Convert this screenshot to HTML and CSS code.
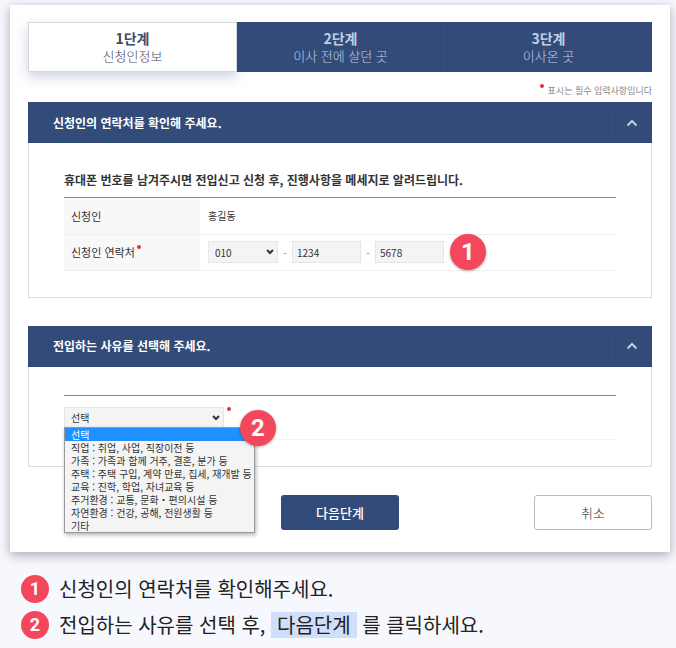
FILE: index.html
```html
<!DOCTYPE html>
<html lang="ko">
  <head>
    <meta charset="UTF-8" />
    <meta name="viewport" content="width=device-width, initial-scale=1.0" />
    <link rel="stylesheet" href="styles.css">
    <title>전입신고</title>
  </head>
  <body>
    <form class="card">
      <ol class="steps">
        <li class="step active"><strong>1단계</strong><span>신청인정보</span></li>
        <li class="step"><strong>2단계</strong><span>이사 전에 살던 곳</span></li>
        <li class="step"><strong>3단계</strong><span>이사온 곳</span></li>
      </ol>

      <p class="note"><span class="required"></span>표시는 필수 입력사항입니다</p>

      <!-- contact -->
      <section class="panel">
        <div class="panel-head">
          <h2>신청인의 연락처를 확인해 주세요.</h2>
          <button type="button" class="toggle" aria-label="접기">
            <svg width="12" height="8" viewBox="0 0 12 8"><path d="M1.5 6.5 6 2l4.500 4.500" /></svg>
          </button>
        </div>
        <div class="panel-body">
          <h3>휴대폰 번호를 남겨주시면 전입신고 신청 후, 진행사항을 메세지로 알려드립니다.</h3>
          <table class="info">
            <tr>
              <th scope="row">신청인</th>
              <td>홍길동</td>
            </tr>
            <tr>
              <th scope="row"><label for="phone1">신청인 연락처</label><span class="required"></span></th>
              <td>
                <div class="phone">
                  <div class="select">
                    <select id="phone1"><option>010</option></select>
                    <svg width="8" height="6" viewBox="0 0 8 6"><path d="M1 1l3 3 3-3" /></svg>
                  </div>
                  <span class="dash">-</span>
                  <input type="text" value="1234" aria-label="가운데 번호" />
                  <span class="dash">-</span>
                  <input type="text" value="5678" aria-label="끝 번호" />
                  <span class="badge">1</span>
                </div>
              </td>
            </tr>
          </table>
        </div>
      </section>

      <!-- reason -->
      <section class="panel">
        <div class="panel-head">
          <h2>전입하는 사유를 선택해 주세요.</h2>
          <button type="button" class="toggle" aria-label="접기">
            <svg width="12" height="8" viewBox="0 0 12 8"><path d="M1.5 6.5 6 2l4.500 4.500" /></svg>
          </button>
        </div>
        <div class="panel-body">
          <div class="reason">
            <div class="reason-field">
              <div class="select">
                <select id="reason" aria-label="전입 사유"><option>선택</option></select>
                <svg width="8" height="6" viewBox="0 0 8 6"><path d="M1 1l3 3 3-3" /></svg>
              </div>
              <ul class="menu">
                <li class="selected">선택</li>
                <li>직업 : 취업, 사업, 직장이전 등</li>
                <li>가족 : 가족과 함께 거주, 결혼, 분가 등</li>
                <li>주택 : 주택 구입, 계약 만료, 집세, 재개발 등</li>
                <li>교육 : 진학, 학업, 자녀교육 등</li>
                <li>주거환경 : 교통, 문화・편의시설 등</li>
                <li>자연환경 : 건강, 공해, 전원생활 등</li>
                <li>기타</li>
              </ul>
              <span class="badge">2</span>
            </div>
            <span class="required"></span>
          </div>
        </div>
      </section>

      <div class="actions">
        <button type="button" class="button next">다음단계</button>
        <button type="button" class="button cancel">취소</button>
      </div>
    </form>

    <ol class="guide">
      <li><span class="badge small">1</span><p>신청인의 연락처를 확인해주세요.</p></li>
      <li><span class="badge small">2</span><p>전입하는 사유를 선택 후, <mark>다음단계</mark> 를 클릭하세요.</p></li>
    </ol>
  </body>
</html>
```
FILE: styles.css
```css
* {
  box-sizing: border-box;
}

body {
  margin: 0;
  padding: 5px 6px 0 10px;
  font-family: "Noto Sans CJK KR", "Noto Sans", sans-serif;
  font-size: 10px;
  color: #333;
  background-color: #f7f8fd;
}

h2,
h3,
p,
ol,
ul {
  margin: 0;
  padding: 0;
}

ol,
ul {
  list-style: none;
}

button,
input,
select {
  font-family: inherit;
  color: inherit;
}

svg {
  fill: none;
  stroke: currentColor;
  stroke-width: 2;
}

.card {
  padding: 17px 18px 22px;
  background-color: #fff;
  box-shadow: 0 3px 10px rgba(50, 50, 70, 0.4);
}

/* steps */
.steps {
  display: flex;
}

.step {
  flex: 1;
  display: flex;
  flex-direction: column;
  justify-content: center;
  height: 50px;
  font-size: 13px;
  line-height: 18px;
  text-align: center;
  color: #c3cee4;
  background-color: #334b79;
}

.step + .step + .step {
  border-left: 1px solid #3a5180;
}

.step strong {
  font-size: 14px;
}

.step span {
  font-weight: 300;
}

.step.active {
  color: #3f4b66;
  background-color: #fff;
  border: 1px solid #d3d8e2;
  box-shadow: 0 5px 12px rgba(51, 75, 121, 0.25);
}

.required {
  display: inline-block;
  flex: none;
  width: 4px;
  height: 4px;
  border-radius: 50%;
  background-color: #e0323c;
}

.note {
  display: flex;
  justify-content: flex-end;
  gap: 4px;
  padding: 12px 0 4px;
  font-size: 9px;
  line-height: 14px;
  color: #888;
}

/* panels */
.panel {
  margin-bottom: 28px;
  border: 1px solid #dcdee3;
  border-top: none;
}

.panel-head {
  display: flex;
  align-items: center;
  justify-content: space-between;
  height: 41px;
  margin: 0 -1px;
  padding-left: 25px;
  color: #fff;
  background-color: #334b79;
}

.panel-head h2 {
  font-size: 12px;
  line-height: 18px;
}

.toggle {
  display: flex;
  align-items: center;
  justify-content: center;
  width: 41px;
  height: 30px;
  padding: 0;
  border: none;
  border-left: 1px solid #3a5180;
  color: #c3cee4;
  background: none;
}

.panel-body {
  padding: 28px 35px 26px;
}

.panel-body h3 {
  padding-bottom: 8px;
  font-size: 12px;
  line-height: 18px;
  border-bottom: 1px solid #85858f;
}

.info {
  width: 100%;
  border-collapse: collapse;
}

.info th,
.info td {
  height: 36px;
  padding: 0 0 0 8px;
  text-align: left;
  border-bottom: 1px solid #f0f0f0;
}

.info th {
  width: 136px;
  padding-left: 7px;
  font-size: 11px;
  font-weight: 400;
  background-color: #f8f8f8;
}

.info .required {
  margin-left: 2px;
  vertical-align: 8px;
}

.phone {
  display: flex;
  align-items: center;
  height: 35px;
}

.select {
  display: grid;
  align-items: center;
  width: 70px;
}

.select select,
.select svg {
  grid-area: 1 / 1;
}

.select svg {
  justify-self: end;
  margin-right: 4px;
  pointer-events: none;
}

.select select,
.phone input {
  appearance: none;
  width: 100%;
  height: 22px;
  padding: 0 6px;
  font-size: 10px;
  border: 1px solid #e6e6e6;
  border-radius: 0;
  background-color: #f4f4f4;
}

.phone input {
  width: 69px;
  padding: 0 4px;
}

.dash {
  width: 14px;
  text-align: center;
  color: #888;
}

.badge {
  display: flex;
  flex: none;
  align-items: center;
  justify-content: center;
  width: 36px;
  height: 36px;
  border-radius: 50%;
  font-family: Roboto, sans-serif;
  font-size: 24px;
  font-weight: 700;
  line-height: 24px;
  color: #fff;
  background-color: #f5475c;
  box-shadow: 0 1px 3px rgba(0, 0, 0, 0.3);
}

.phone .badge {
  margin-left: 6px;
}

/* reason drop-down */
.reason {
  display: flex;
  gap: 3px;
  padding: 11px 0 10px;
  border-top: 1px solid #85858f;
  border-bottom: 1px solid #f3f3f3;
}

.reason-field {
  position: relative;
  width: 160px;
}

.reason-field .select {
  width: 100%;
}

.menu {
  position: absolute;
  top: 20px;
  left: 0;
  width: 191px;
  border: 1px solid #999;
  line-height: 13px;
  white-space: nowrap;
  background-color: #f4f4f4;
  box-shadow: 1px 2px 4px rgba(0, 0, 0, 0.3);
}

.menu li {
  padding-left: 6px;
}

.menu .selected {
  color: #fff;
  background-color: #1e90ff;
}

.reason-field .badge {
  position: absolute;
  top: 3px;
  left: 176px;
}

/* buttons */
.actions {
  display: grid;
  grid-template-columns: 1fr 118px 1fr;
}

.button {
  height: 35px;
  font-size: 13px;
  border-radius: 3px;
}

.next {
  grid-column: 2;
  border: none;
  font-weight: 500;
  color: #fff;
  background-color: #334b79;
}

.cancel {
  justify-self: end;
  width: 118px;
  border: 1px solid #bbb;
  font-weight: 300;
  background-color: #fff;
}

/* guide */
.guide {
  padding: 19px 11px 0;
  font-size: 20px;
  line-height: 36px;
  color: #222;
}

.guide li {
  display: flex;
  align-items: center;
  gap: 10px;
}

.badge.small {
  width: 28px;
  height: 28px;
  font-size: 18px;
  box-shadow: none;
}

.guide mark {
  display: inline-block;
  padding: 0 6px;
  line-height: 26px;
  color: inherit;
  background-color: #cfdffa;
}
```
